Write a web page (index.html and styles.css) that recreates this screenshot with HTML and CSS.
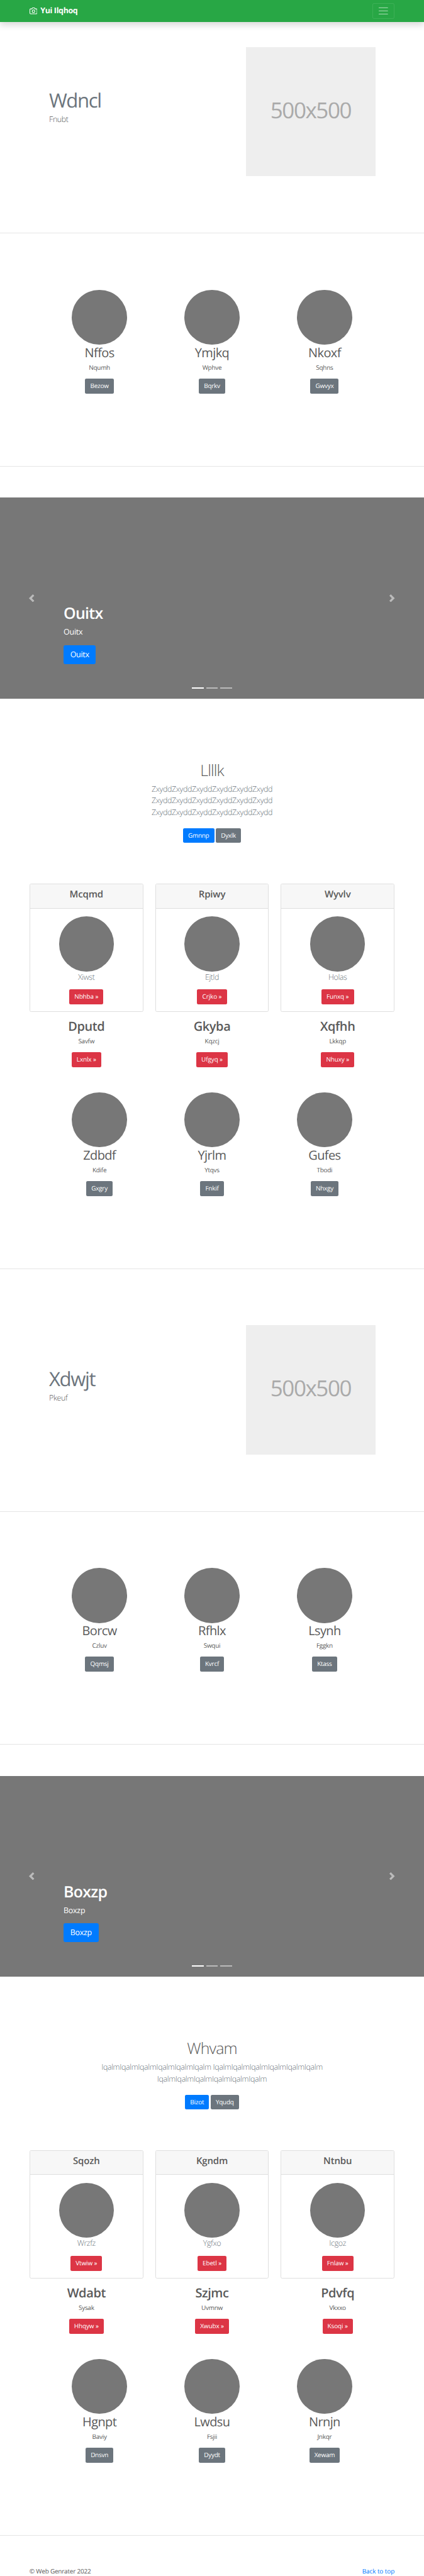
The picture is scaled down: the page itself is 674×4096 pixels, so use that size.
FILE: index.html
```html
<!DOCTYPE html>
<html lang="en">
<head>
<meta charset="utf-8">
<title>Yui Ilqhoq</title>
<link rel="stylesheet" href="styles.css">
</head>
<body>
<svg class="sprite" aria-hidden="true">
  <symbol id="prev" viewBox="0 0 8 8"><path d="M5.25 0l-4 4 4 4 1.5-1.5L4.25 4l2.5-2.5L5.25 0z"/></symbol>
  <symbol id="next" viewBox="0 0 8 8"><path d="M2.75 0l-1.5 1.5L3.75 4l-2.5 2.5L2.75 8l4-4-4-4z"/></symbol>
</svg>
<header class="navbar">
  <a class="brand"><svg class="camera" viewBox="0 0 24 24"><path d="M23 19a2 2 0 0 1-2 2H3a2 2 0 0 1-2-2V8a2 2 0 0 1 2-2h4l2-3h6l2 3h4a2 2 0 0 1 2 2z"/><circle cx="12" cy="13" r="4"/></svg><strong>Yui Ilqhoq</strong></a>
  <button class="toggler" aria-label="Menu"><svg viewBox="0 0 30 30"><path d="M4 7h22M4 15h22M4 23h22"/></svg></button>
</header>
<main>
  <section class="hero">
    <div class="hero-text"><h2 class="hero-title">Wdncl</h2><p class="lead">Fnubt</p></div>
    <div class="thumb"><span>500x500</span></div>
  </section>
  <hr>
  <section class="trio">
    <div class="col"><i class="disc"></i><h2>Nffos</h2><p>Nqumh</p><a class="btn gray">Bezow</a></div>
    <div class="col"><i class="disc"></i><h2>Ymjkq</h2><p>Wphve</p><a class="btn gray">Bqrkv</a></div>
    <div class="col"><i class="disc"></i><h2>Nkoxf</h2><p>Sqhns</p><a class="btn gray">Gwvyx</a></div>
  </section>
  <hr>
  <section class="carousel">
    <svg class="arrow"><use href="#prev"/></svg>
    <div class="caption"><h1>Ouitx</h1><p>Ouitx</p><a class="btn btn-lg blue">Ouitx</a></div>
    <svg class="arrow"><use href="#next"/></svg>
    <div class="dots"><i class="on"></i><i></i><i></i></div>
  </section>
  <section class="intro">
    <h1>Llllk</h1>
    <p class="lead">ZxyddZxyddZxyddZxyddZxyddZxydd<br>ZxyddZxyddZxyddZxyddZxyddZxydd<br>ZxyddZxyddZxyddZxyddZxyddZxydd</p>
    <div class="actions"><a class="btn blue">Gmnnp</a><a class="btn gray">Dyxlk</a></div>
  </section>
  <section class="deck">
    <div class="card"><h4>Mcqmd</h4><div class="card-body"><i class="disc"></i><p class="lead">Xiwst</p><a class="btn red">Nbhba »</a></div></div>
    <div class="card"><h4>Rpiwy</h4><div class="card-body"><i class="disc"></i><p class="lead">Ejtld</p><a class="btn red">Crjko »</a></div></div>
    <div class="card"><h4>Wyvlv</h4><div class="card-body"><i class="disc"></i><p class="lead">Holas</p><a class="btn red">Funxq »</a></div></div>
  </section>
  <section class="notes">
    <div class="col"><h2>Dputd</h2><p>Savfw</p><a class="btn red">Lxnlx »</a></div>
    <div class="col"><h2>Gkyba</h2><p>Kqzcj</p><a class="btn red">Ufgyq »</a></div>
    <div class="col"><h2>Xqfhh</h2><p>Lkkqp</p><a class="btn red">Nhuxy »</a></div>
  </section>
  <section class="trio after-notes">
    <div class="col"><i class="disc"></i><h2>Zdbdf</h2><p>Kdife</p><a class="btn gray">Gxgry</a></div>
    <div class="col"><i class="disc"></i><h2>Yjrlm</h2><p>Ytqvs</p><a class="btn gray">Fnkif</a></div>
    <div class="col"><i class="disc"></i><h2>Gufes</h2><p>Tbodi</p><a class="btn gray">Nhxgy</a></div>
  </section>
  <hr>
  <section class="hero second">
    <div class="hero-text"><h2 class="hero-title">Xdwjt</h2><p class="lead">Pkeuf</p></div>
    <div class="thumb"><span>500x500</span></div>
  </section>
  <hr>
  <section class="trio">
    <div class="col"><i class="disc"></i><h2>Borcw</h2><p>Czluv</p><a class="btn gray">Qqmsj</a></div>
    <div class="col"><i class="disc"></i><h2>Rfhlx</h2><p>Swqui</p><a class="btn gray">Kvrcf</a></div>
    <div class="col"><i class="disc"></i><h2>Lsynh</h2><p>Fggkn</p><a class="btn gray">Ktass</a></div>
  </section>
  <hr>
  <section class="carousel">
    <svg class="arrow"><use href="#prev"/></svg>
    <div class="caption"><h1>Boxzp</h1><p>Boxzp</p><a class="btn btn-lg blue">Boxzp</a></div>
    <svg class="arrow"><use href="#next"/></svg>
    <div class="dots"><i class="on"></i><i></i><i></i></div>
  </section>
  <section class="intro">
    <h1>Whvam</h1>
    <p class="lead">IqalmIqalmIqalmIqalmIqalmIqalm IqalmIqalmIqalmIqalmIqalmIqalm<br>IqalmIqalmIqalmIqalmIqalmIqalm</p>
    <div class="actions"><a class="btn blue">Bizot</a><a class="btn gray">Yqudq</a></div>
  </section>
  <section class="deck">
    <div class="card"><h4>Sqozh</h4><div class="card-body"><i class="disc"></i><p class="lead">Wrzfz</p><a class="btn red">Vtwiw »</a></div></div>
    <div class="card"><h4>Kgndm</h4><div class="card-body"><i class="disc"></i><p class="lead">Ygfxo</p><a class="btn red">Ebetl »</a></div></div>
    <div class="card"><h4>Ntnbu</h4><div class="card-body"><i class="disc"></i><p class="lead">Icgoz</p><a class="btn red">Fnlaw »</a></div></div>
  </section>
  <section class="notes">
    <div class="col"><h2>Wdabt</h2><p>Sysak</p><a class="btn red">Hhqyw »</a></div>
    <div class="col"><h2>Szjmc</h2><p>Uvmnw</p><a class="btn red">Xwubx »</a></div>
    <div class="col"><h2>Pdvfq</h2><p>Vkxxo</p><a class="btn red">Ksoqi »</a></div>
  </section>
  <section class="trio after-notes">
    <div class="col"><i class="disc"></i><h2>Hgnpt</h2><p>Baviy</p><a class="btn gray">Dnsvn</a></div>
    <div class="col"><i class="disc"></i><h2>Lwdsu</h2><p>Fsjii</p><a class="btn gray">Dyydt</a></div>
    <div class="col"><i class="disc"></i><h2>Nrnjn</h2><p>Jnkqr</p><a class="btn gray">Xewam</a></div>
  </section>
  <hr>
</main>
<footer class="footer"><span>© Web Genrater 2022</span><a>Back to top</a></footer>
</body>
</html>
```

FILE: styles.css
```css
/* 1rem = ten design pixels */
html { font-size: 6.2407px; }
* { box-sizing: border-box; }
body {
  margin: 0;
  background: #fff;
  color: #5a5a5a;
  font: 1.6rem/1.5 "Open Sans", "Noto Sans", sans-serif;
  letter-spacing: -.026em;
  text-rendering: geometricPrecision;
}
h1, h2, h4, p { margin: 0; }
.sprite { display: none; }

.navbar {
  position: relative;
  display: flex;
  align-items: center;
  justify-content: space-between;
  height: 5.6rem;
  padding: 0 7.5rem;
  background: #28a745;
  box-shadow: 0 .8rem 1.6rem rgba(0, 0, 0, .15);
}
.brand { display: flex; align-items: center; gap: .8rem; color: #fff; font-size: 2rem; letter-spacing: -.028em; }
.camera { width: 2rem; height: 2rem; fill: none; stroke: #fff; stroke-width: 2; stroke-linecap: round; stroke-linejoin: round; }
.toggler {
  display: flex;
  align-items: center;
  justify-content: center;
  width: 5.6rem;
  height: 4rem;
  padding: 0;
  border: 1px solid rgba(255, 255, 255, .1);
  border-radius: .4rem;
  background: none;
}
.toggler svg { width: 3rem; height: 3rem; stroke: rgba(255, 255, 255, .5); stroke-width: 2; stroke-linecap: round; }

hr { height: 0; margin: 0; border: 0; border-top: 1px solid rgba(0, 0, 0, .1); margin-bottom: -.06rem; }

.hero {
  display: flex;
  align-items: center;
  justify-content: space-between;
  height: 53.72rem;
  padding: 6.4rem 12.4rem 14.4rem 12.5rem;
}
.hero.second { height: 61.7rem; padding-top: 14.4rem; }
.hero-title { font-size: 5rem; line-height: 1; font-weight: 400; letter-spacing: -.046em; color: #6c757d; margin-bottom: .8rem; }
.hero-text { padding-bottom: 1.6rem; }
.lead { font-size: 2rem; font-weight: 300; letter-spacing: -.031em; }
.thumb {
  display: flex;
  align-items: center;
  justify-content: center;
  width: 32.92rem;
  height: 32.92rem;
  padding-bottom: .6rem;
  background: #eee;
  color: #aaa;
  font-size: 5.6rem;
  letter-spacing: -.04em;
}

.trio { display: flex; justify-content: center; padding: 14.4rem 11rem 18.45rem; }
.trio.after-notes { padding-top: 6.4rem; }
.col { flex: 1; display: flex; flex-direction: column; align-items: center; }
.col h2 { font-size: 3.2rem; line-height: 1.2; font-weight: 400; letter-spacing: -.03em; padding-top: .1rem; margin-bottom: .7rem; }
.col p { margin-bottom: 1.6rem; }
.disc { display: block; width: 14rem; height: 14rem; border-radius: 50%; background: #777; }

.btn {
  display: block;
  height: 3.8rem;
  padding: 0 1.3rem;
  border-radius: .4rem;
  color: #fff;
  line-height: 3.8rem;
  white-space: nowrap;
}
.gray { background: #6c757d; }
.blue { background: #007bff; }
.red { background: #dc3545; letter-spacing: -.012em; }
.btn-lg { height: 4.8rem; padding: 0 1.7rem; border-radius: .48rem; font-size: 2rem; line-height: 4.8rem; }

.carousel {
  position: relative;
  display: flex;
  align-items: center;
  height: 51.2rem;
  margin-top: 8rem;
  padding: 0 7.1rem;
  background: #777;
  color: #fff;
}
.arrow { width: 2rem; height: 2rem; fill: #fff; opacity: .5; }
.caption { flex: 1; align-self: flex-end; display: flex; flex-direction: column; align-items: flex-start; padding: 0 7.1rem 8.8rem; }
.caption h1 { font-size: 4rem; line-height: 1.2; font-weight: 600; letter-spacing: -.03em; margin-bottom: .8rem; }
.caption p { font-size: 2rem; line-height: 1.4; margin-bottom: 2rem; }
.dots { position: absolute; left: 0; right: 0; bottom: 2.6rem; display: flex; justify-content: center; gap: .6rem; }
.dots i { width: 3rem; height: .3rem; background: rgba(255, 255, 255, .5); }
.dots .on { background: #fff; }

.intro { display: flex; flex-direction: column; align-items: center; padding: 16rem 0 10.4rem; text-align: center; }
.intro h1 { font-size: 4rem; line-height: 1.2; font-weight: 300; letter-spacing: -.034em; margin-bottom: .8rem; }
.intro .lead { color: #6c757d; margin-bottom: 2.4rem; }
.actions { display: flex; gap: .4rem; }

.deck { display: grid; grid-template-columns: repeat(3, 1fr); gap: 3rem; padding: 0 7.5rem; text-align: center; }
.card { height: 32.7rem; border: 1px solid #dfdfdf; border-radius: .4rem; overflow: hidden; }
.card h4 { height: 6.15rem; padding: 1.2rem 0; border-bottom: 1px solid #dfdfdf; background: #f7f7f7; font-size: 2.4rem; line-height: 1.2; font-weight: 600; letter-spacing: -.01em; }
.card-body { display: flex; flex-direction: column; align-items: center; padding: 2rem 0; }
.card .lead { color: #6c757d; margin-bottom: 1.6rem; }
.notes { display: flex; gap: 3rem; padding: 1.6rem 7.5rem 0; }
.notes h2 { font-weight: 600; letter-spacing: -.019em; }

.footer { display: flex; justify-content: space-between; height: 10.35rem; padding: 7.9rem 7.5rem 0; letter-spacing: -.021em; }
.footer a { color: #007bff; letter-spacing: -.008em; }
```
